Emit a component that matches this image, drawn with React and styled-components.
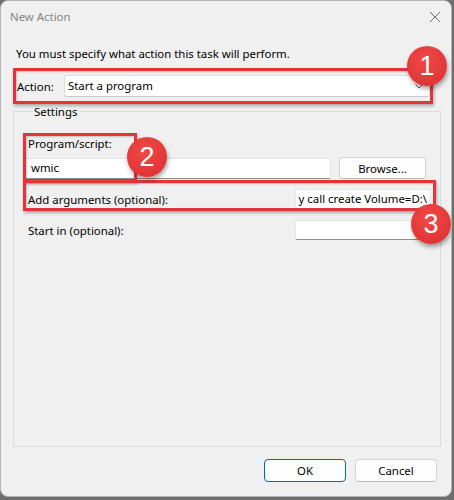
import React from 'react';
import styled, { createGlobalStyle } from 'styled-components';

const Global = createGlobalStyle`
  html, body { margin: 0; padding: 0; background: #6e6e6e; }
  body { width: 454px; height: 500px; overflow: hidden; }
`;

const Window = styled.div`
  position: relative;
  box-sizing: border-box;
  width: 452px;
  height: 497px;
  background: #f0f0f0;
  border: 1px solid #b4b4b4;
  border-radius: 8px;
  display: flex;
  flex-direction: column;
  padding: 0 10px 0 12px;
  font-family: "Noto Sans", "Open Sans", sans-serif;
  font-size: 11.4px;
  line-height: 16px;
  color: #000;
  overflow: hidden;
`;

const TitleBar = styled.div`
  height: 31px;
  display: flex;
  align-items: center;
  justify-content: space-between;
  margin: 0 -2px 0 -3px;
`;

const Title = styled.span`
  color: #858585;
`;

const CloseIcon = styled.svg`
  width: 12px;
  height: 12px;
  margin-right: 2px;
`;

const Instruction = styled.div`
  margin: 14px 0 0 3px;
  height: 16px;
`;

const ActionRow = styled.div`
  margin: 13px 0 0 4px;
  display: flex;
  align-items: center;
  height: 22px;
`;

const ActionLabel = styled.span`
  width: 47px;
  padding-top: 1px;
`;

const Combo = styled.div`
  box-sizing: border-box;
  width: 366px;
  height: 22px;
  background: #fff;
  border: 1px solid #dedede;
  border-bottom-color: #c8c8c8;
  border-radius: 3px;
  display: flex;
  align-items: center;
  justify-content: space-between;
  padding: 0 6px 0 3px;
`;

const Chevron = styled.svg`
  width: 8px;
  height: 5px;
`;

const Group = styled.fieldset`
  flex: 1;
  margin: 6px 0 0 0;
  padding: 0 0 0 11px;
  border: 1px solid #dcdcdc;
  border-radius: 0;
  min-width: 0;
  display: flex;
  flex-direction: column;
`;

const Legend = styled.legend`
  margin-left: 7px;
  padding: 1px 2px 0;
  line-height: 16px;
`;

const FieldLabel = styled.div`
  margin: 16px 0 0 3px;
  height: 16px;
`;

const Row = styled.div`
  display: flex;
  align-items: center;
  margin-top: ${(p) => p.$gap}px;
  height: ${(p) => p.$h}px;
`;

const RowLabel = styled.span`
  width: 267px;
  padding: 2px 0 0 3px;
  flex: none;
`;

const TextBox = styled.div`
  box-sizing: border-box;
  width: ${(p) => p.$w}px;
  height: ${(p) => p.$h}px;
  background: #fff;
  border: 1px solid #e6e6e6;
  border-bottom-color: #8c8c8c;
  border-radius: 2px;
  display: flex;
  align-items: center;
  justify-content: ${(p) => (p.$end ? 'flex-end' : 'flex-start')};
  padding: 0 3px 0 2px;
  overflow: hidden;
  white-space: nowrap;
  flex: none;
`;

const Button = styled.button`
  box-sizing: border-box;
  width: ${(p) => p.$w}px;
  height: ${(p) => p.$h}px;
  font-family: inherit;
  font-size: 11.4px;
  color: #000;
  background: #fdfdfd;
  border: 1px solid ${(p) => (p.$primary ? '#0a64b4' : '#d4d4d4')};
  border-bottom-color: ${(p) => (p.$primary ? '#0a64b4' : '#bcbcbc')};
  border-radius: 4px;
  padding: 0;
  margin-left: ${(p) => p.$ml || 0}px;
  flex: none;
`;

const Footer = styled.div`
  display: flex;
  justify-content: flex-end;
  gap: 9px;
  margin: 12px 4px 14px 0;
`;

const Highlight = styled.div`
  position: absolute;
  box-sizing: border-box;
  left: ${(p) => p.$x - 1}px;
  top: ${(p) => p.$y - 1}px;
  width: ${(p) => p.$w}px;
  height: ${(p) => p.$h}px;
  border: 3px solid #e2353b;
  box-shadow: 1px 2px 3px rgba(0, 0, 0, 0.3), inset 1px 1px 2px rgba(0, 0, 0, 0.2);
  pointer-events: none;
`;

const Badge = styled.div`
  position: absolute;
  box-sizing: border-box;
  left: ${(p) => p.$cx - 21}px;
  top: ${(p) => p.$cy - 21}px;
  width: 40px;
  height: 40px;
  border-radius: 50%;
  background: radial-gradient(circle at 45% 35%, #f04848 0%, #e53a3a 55%, #d62e2e 100%);
  box-shadow: 1px 3px 4px rgba(0, 0, 0, 0.35);
  color: #fff;
  font-family: "Liberation Sans", Arial, sans-serif;
  font-size: 27px;
  line-height: 40px;
  text-align: center;
`;

export default function App() {
  return (
    <>
      <Global />
      <Window>
        <TitleBar>
          <Title>New Action</Title>
          <CloseIcon viewBox="0 0 12 12">
            <path d="M1 1 L11 11 M11 1 L1 11" stroke="#6f6f6f" strokeWidth="1" fill="none" />
          </CloseIcon>
        </TitleBar>
        <Instruction>You must specify what action this task will perform.</Instruction>
        <ActionRow>
          <ActionLabel>Action:</ActionLabel>
          <Combo>
            <span>Start a program</span>
            <Chevron viewBox="0 0 8 5">
              <path d="M0.5 0.5 L4 4 L7.5 0.5" stroke="#5a5a5a" strokeWidth="1" fill="none" />
            </Chevron>
          </Combo>
        </ActionRow>
        <Group>
          <Legend>Settings</Legend>
          <FieldLabel>Program/script:</FieldLabel>
          <Row $gap={5} $h={22}>
            <TextBox $w={306} $h={21}>&nbsp;wmic</TextBox>
            <Button $w={87} $h={22} $ml={8}>Browse...</Button>
          </Row>
          <Row $gap={9} $h={21}>
            <RowLabel>Add arguments (optional):</RowLabel>
            <TextBox $w={136} $h={20} $end>
              y call create Volume=D:\
            </TextBox>
          </Row>
          <Row $gap={10} $h={21}>
            <RowLabel>Start in (optional):</RowLabel>
            <TextBox $w={136} $h={20} />
          </Row>
        </Group>
        <Footer>
          <Button $w={82} $h={23} $primary>OK</Button>
          <Button $w={82} $h={23}>Cancel</Button>
        </Footer>

        <Highlight $x={13} $y={68} $w={420} $h={36} />
        <Highlight $x={23} $y={133} $w={114} $h={49} />
        <Highlight $x={23} $y={180} $w={413} $h={31} />
        <Badge $cx={427} $cy={66}>1</Badge>
        <Badge $cx={147} $cy={157}>2</Badge>
        <Badge $cx={431} $cy={224}>3</Badge>
      </Window>
    </>
  );
}
